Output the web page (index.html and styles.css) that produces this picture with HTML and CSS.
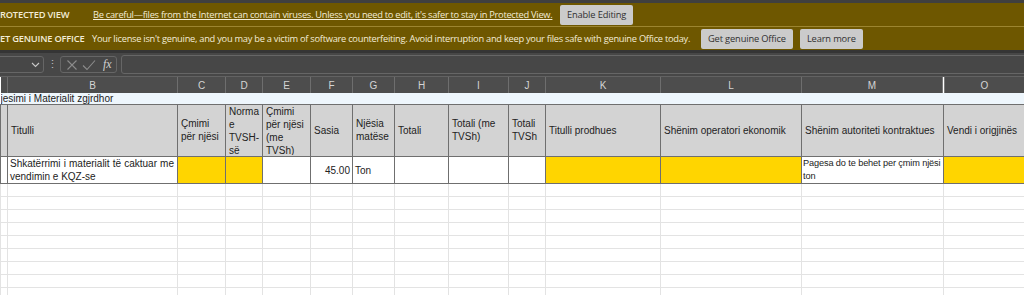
FILE: index.html
```html
<!DOCTYPE html>
<html lang="sq">
<head>
  <meta charset="UTF-8">
  <meta name="viewport" content="width=device-width, initial-scale=1.0">
  <title>Formulari i Materialit</title>
  <link rel="stylesheet" href="styles.css">
</head>
<body>
  <div class="top-strip"></div>

  <div class="msgbar msgbar-first">
    <span class="msg-title">ROTECTED VIEW</span>
    <a class="msg-link" href="#">Be careful—files from the Internet can contain viruses. Unless you need to edit, it's safer to stay in Protected View.</a>
    <button class="msg-btn">Enable Editing</button>
  </div>

  <div class="msgbar">
    <span class="msg-title msg-title-wide">ET GENUINE OFFICE</span>
    <span class="msg-text">Your license isn't genuine, and you may be a victim of software counterfeiting. Avoid interruption and keep your files safe with genuine Office today.</span>
    <button class="msg-btn">Get genuine Office</button>
    <button class="msg-btn">Learn more</button>
  </div>

  <div class="formula-bar">
    <div class="name-box">
      <svg width="9" height="6" viewBox="0 0 9 6"><path d="M1 1 L4.5 4.5 L8 1" fill="none" stroke="#c8c8c8" stroke-width="1.1"/></svg>
    </div>
    <span class="fb-dots">⋮</span>
    <div class="fb-tools">
      <svg width="12" height="12" viewBox="0 0 12 12"><path d="M1.5 1.5 L10.5 10.5 M10.5 1.5 L1.5 10.5" stroke="#8c8c8c" stroke-width="1.1"/></svg>
      <svg width="14" height="12" viewBox="0 0 14 12"><path d="M1 6.5 L5 10.5 L13 1.5" fill="none" stroke="#8c8c8c" stroke-width="1.1"/></svg>
      <span class="fx">fx</span>
    </div>
    <div class="fb-input"></div>
  </div>

  <table class="sheet">
    <colgroup>
      <col class="c-a"><col class="c-b"><col class="c-c"><col class="c-d"><col class="c-e">
      <col class="c-f"><col class="c-g"><col class="c-h"><col class="c-i"><col class="c-j">
      <col class="c-k"><col class="c-l"><col class="c-m"><col class="c-o">
    </colgroup>
    <tr class="col-head">
      <td></td><td>B</td><td>C</td><td>D</td><td>E</td><td>F</td><td>G</td>
      <td>H</td><td>I</td><td>J</td><td>K</td><td>L</td><td class="hidden-edge">M</td><td>O</td>
    </tr>
    <tr class="title-row">
      <td colspan="14">jesimi i Materialit zgjrdhor</td>
    </tr>
    <tr class="head-row">
      <td></td>
      <td><div class="hd"><span>Titulli</span></div></td>
      <td><div class="hd"><span>Çmimi për njësi</span></div></td>
      <td><div class="hd"><span>Norma e TVSH-së</span></div></td>
      <td><div class="hd"><span>Çmimi për njësi (me TVSh)</span></div></td>
      <td><div class="hd"><span>Sasia</span></div></td>
      <td><div class="hd"><span>Njësia matëse</span></div></td>
      <td><div class="hd"><span>Totali</span></div></td>
      <td><div class="hd"><span>Totali (me TVSh)</span></div></td>
      <td><div class="hd"><span>Totali TVSh</span></div></td>
      <td><div class="hd"><span>Titulli prodhues</span></div></td>
      <td><div class="hd"><span>Shënim operatori ekonomik</span></div></td>
      <td><div class="hd"><span>Shënim autoriteti kontraktues</span></div></td>
      <td class="no-right"><div class="hd"><span>Vendi i origjinës</span></div></td>
    </tr>
    <tr class="data-row">
      <td></td>
      <td class="justify">Shkatërrimi i materialit të caktuar me vendimin e KQZ-se</td>
      <td class="yellow"></td>
      <td class="yellow"></td>
      <td></td>
      <td class="num">45.00</td>
      <td>Ton</td>
      <td></td>
      <td></td>
      <td></td>
      <td class="yellow"></td>
      <td class="yellow"></td>
      <td class="tight">Pagesa do te behet per çmim njësi<br>ton</td>
      <td class="yellow no-right"></td>
    </tr>
    <tr class="empty"><td></td><td></td><td></td><td></td><td></td><td></td><td></td><td></td><td></td><td></td><td></td><td></td><td></td><td></td></tr>
    <tr class="empty"><td></td><td></td><td></td><td></td><td></td><td></td><td></td><td></td><td></td><td></td><td></td><td></td><td></td><td></td></tr>
    <tr class="empty"><td></td><td></td><td></td><td></td><td></td><td></td><td></td><td></td><td></td><td></td><td></td><td></td><td></td><td></td></tr>
    <tr class="empty"><td></td><td></td><td></td><td></td><td></td><td></td><td></td><td></td><td></td><td></td><td></td><td></td><td></td><td></td></tr>
    <tr class="empty"><td></td><td></td><td></td><td></td><td></td><td></td><td></td><td></td><td></td><td></td><td></td><td></td><td></td><td></td></tr>
    <tr class="empty"><td></td><td></td><td></td><td></td><td></td><td></td><td></td><td></td><td></td><td></td><td></td><td></td><td></td><td></td></tr>
    <tr class="empty"><td></td><td></td><td></td><td></td><td></td><td></td><td></td><td></td><td></td><td></td><td></td><td></td><td></td><td></td></tr>
    <tr class="empty"><td></td><td></td><td></td><td></td><td></td><td></td><td></td><td></td><td></td><td></td><td></td><td></td><td></td><td></td></tr>
    <tr class="empty"><td></td><td></td><td></td><td></td><td></td><td></td><td></td><td></td><td></td><td></td><td></td><td></td><td></td><td></td></tr>
  </table>
</body>
</html>
```

FILE: styles.css
```css
body {
  margin: 0;
  padding: 0;
  width: 1024px;
  height: 295px;
  overflow: hidden;
  background: #ffffff;
  font-family: "Liberation Sans", Arial, sans-serif;
}

/* message bars */
.top-strip {
  height: 3px;
  background: #3f3f3f;
}
.msgbar {
  display: flex;
  align-items: center;
  height: 23px;
  background: #6e5700;
  color: #f3ecd6;
  font-family: "Open Sans", sans-serif;
  font-size: 9.3px;
  white-space: nowrap;
}
.msgbar-first {
  border-bottom: 1px solid #9c8530;
}
.msg-title {
  width: 93px;
  font-weight: 600;
  letter-spacing: -0.2px;
}
.msg-title-wide {
  width: 92px;
}
.msg-link {
  color: #f3ecd6;
  text-decoration: underline;
  width: 467px;
  letter-spacing: -0.28px;
}
.msg-text {
  width: 609px;
  letter-spacing: -0.27px;
}
.msg-btn {
  height: 20px;
  margin-right: 7px;
  padding: 0 7px;
  border: none;
  border-radius: 2px;
  background: #cbcbcb;
  color: #303030;
  font-family: "Open Sans", sans-serif;
  font-size: 9.3px;
  letter-spacing: -0.15px;
}

/* formula bar */
.formula-bar {
  display: flex;
  align-items: center;
  height: 23px;
  background: #474747;
  border-top: 3px solid #353535;
  border-bottom: 1px solid #626262;
}
.name-box {
  display: flex;
  align-items: center;
  justify-content: flex-end;
  width: 48px;
  height: 17px;
  margin-left: -4px;
  padding-right: 3px;
  box-sizing: border-box;
  border: 1px solid #666666;
  border-radius: 3px;
}
.fb-dots {
  width: 16px;
  text-align: center;
  color: #bdbdbd;
  font-size: 11px;
}
.fb-tools {
  display: flex;
  align-items: center;
  gap: 4px;
  width: 57px;
  height: 17px;
  padding-left: 5px;
  box-sizing: border-box;
  border: 1px solid #666666;
  border-radius: 3px;
}
.fx {
  margin-left: 3px;
  color: #d0d0d0;
  font-family: "Liberation Serif", serif;
  font-style: italic;
  font-size: 12px;
}
.fb-input {
  flex: 1;
  height: 17px;
  margin-left: 4px;
  margin-right: -4px;
  border: 1px solid #666666;
  border-radius: 3px;
}

/* sheet */
.sheet {
  table-layout: fixed;
  border-collapse: collapse;
  width: 1024px;
  font-size: 10px;
  color: #222222;
}
.c-a { width: 7px; }
.c-b { width: 170px; }
.c-c { width: 48px; }
.c-d { width: 37px; }
.c-e { width: 48px; }
.c-f { width: 42px; }
.c-g { width: 42px; }
.c-h { width: 54px; }
.c-i { width: 60px; }
.c-j { width: 37px; }
.c-k { width: 115px; }
.c-l { width: 141px; }
.c-m { width: 142px; }
.c-o { width: 81px; }

.sheet td {
  padding: 0 2px;
  overflow: hidden;
}

.col-head td {
  height: 16px;
  padding: 0;
  background: #4d4d4d;
  color: #d4d4d4;
  text-align: center;
  font-size: 10px;
  border-right: 1px solid #6e6e6e;
}
.col-head .hidden-edge {
  border-right: 3px double #7a7a7a;
}

.title-row td {
  height: 11px;
  padding: 0;
  line-height: 11px;
  background: #eef6fc;
  white-space: nowrap;
}

.head-row td {
  height: 51px;
  padding: 0;
  background: #d3d3d3;
  border: 1px solid #6f6f6f;
  vertical-align: top;
}
.hd {
  display: flex;
  height: 50px;
  padding: 0 3px;
  overflow: hidden;
  line-height: 13px;
}
.hd span {
  margin: auto 0;
}

.data-row td {
  height: 26px;
  line-height: 13px;
  border: 1px solid #6f6f6f;
  background: #ffffff;
  vertical-align: middle;
}
.data-row .justify {
  text-align: justify;
  padding: 0 3px 0 2px;
}
.data-row .num {
  text-align: right;
}
.data-row .tight {
  padding: 0 0 0 1px;
  white-space: nowrap;
  font-size: 9.2px;
  letter-spacing: -0.12px;
}
.data-row .yellow {
  background: #ffd500;
}
.sheet .no-right {
  border-right: none;
}

.empty td {
  height: 12px;
  border: 1px solid #e3e3e3;
}
```
